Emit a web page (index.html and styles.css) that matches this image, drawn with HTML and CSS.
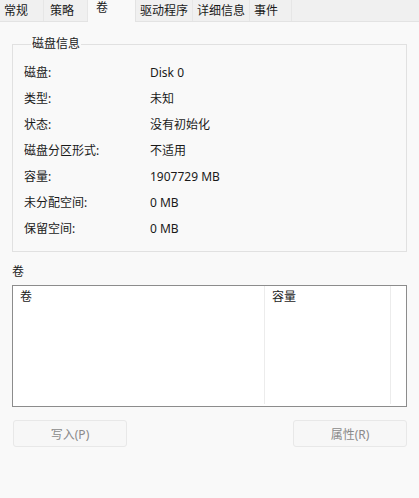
FILE: index.html
```html
<!DOCTYPE html>
<html>
<head>
    <meta charset="UTF-8">
    <title>磁盘属性</title>
    <link rel="stylesheet" href="styles.css">
</head>
<body>
<div class="tabs">
    <span class="tab t1">常规</span>
    <span class="tab t2">策略</span>
    <span class="tab t3 active">卷</span>
    <span class="tab t4">驱动程序</span>
    <span class="tab t5">详细信息</span>
    <span class="tab t6">事件</span>
</div>
<div class="panel">
    <fieldset class="group">
        <legend>磁盘信息</legend>
        <div class="row"><span class="key">磁盘:</span><span class="val">Disk 0</span></div>
        <div class="row"><span class="key">类型:</span><span class="val">未知</span></div>
        <div class="row"><span class="key">状态:</span><span class="val">没有初始化</span></div>
        <div class="row"><span class="key">磁盘分区形式:</span><span class="val">不适用</span></div>
        <div class="row"><span class="key">容量:</span><span class="val">1907729 MB</span></div>
        <div class="row"><span class="key">未分配空间:</span><span class="val">0 MB</span></div>
        <div class="row"><span class="key">保留空间:</span><span class="val">0 MB</span></div>
    </fieldset>
    <div class="vol-label">卷</div>
    <div class="list">
        <div class="col c-name">卷</div>
        <div class="col c-size">容量</div>
        <div class="col c-rest"></div>
    </div>
    <div class="buttons">
        <span class="btn">写入(P)</span>
        <span class="btn">属性(R)</span>
    </div>
</div>
</body>
</html>
```
FILE: styles.css
```css
body{
    margin: 0;
    background: #f9f9f9;
    font-family: "Noto Sans", "Noto Sans CJK SC", sans-serif;
    font-size: 12px;
    color: #1a1a1a;
}
.tabs{
    display: flex;
    height: 21px;
    background: #f0f0f0;
    border-bottom: 1px solid #e3e3e3;
}
.tab{
    display: flex;
    align-items: center;
    padding-left: 4px;
    height: 21px;
    border-right: 1px solid #e6e6e6;
    box-sizing: border-box;
    line-height: 1;
}
.t1{ width: 44px; }
.t2{ width: 44px; padding-left: 6px; }
.t3{ width: 48px; padding-left: 8px; }
.t4{ width: 57px; }
.t5{ width: 57px; }
.t6{ width: 42px; }
.tab.active{
    background: #f9f9f9;
    height: 22px;
    border-right: 1px solid #e3e3e3;
    padding-bottom: 6px;
}
.panel{
    padding: 14px 12px 0 12px;
}
.group{
    margin: 0;
    padding: 7px 0 7px 11px;
    border: 1px solid #e1e1e1;
    width: 395px;
    box-sizing: border-box;
    height: 216px;
}
.group legend{
    padding: 0 1px;
    margin-left: 7px;
    line-height: 16px;
}
.row{
    display: flex;
    height: 26px;
    align-items: center;
}
.key{
    width: 126px;
}
.vol-label{
    margin-top: 12px;
    line-height: 16px;
}
.list{
    margin-top: 5px;
    width: 395px;
    height: 122px;
    box-sizing: border-box;
    border: 1px solid #8c8c8c;
    background: #fff;
    display: flex;
}
.col{
    padding: 3px 0 0 7px;
    line-height: 16px;
    border-right: 1px solid #ececec;
    margin-bottom: 2px;
}
.c-name{ width: 244px; }
.c-size{ width: 118px; }
.c-rest{ border-right: none; flex: 1; }
.buttons{
    display: flex;
    justify-content: space-between;
    margin-top: 13px;
    padding-left: 1px;
}
.btn{
    display: flex;
    align-items: center;
    justify-content: center;
    width: 114px;
    height: 27px;
    box-sizing: border-box;
    border: 1px solid #e8e8e8;
    border-radius: 3px;
    background: #f7f7f7;
    color: #8a8a8a;
}
```
